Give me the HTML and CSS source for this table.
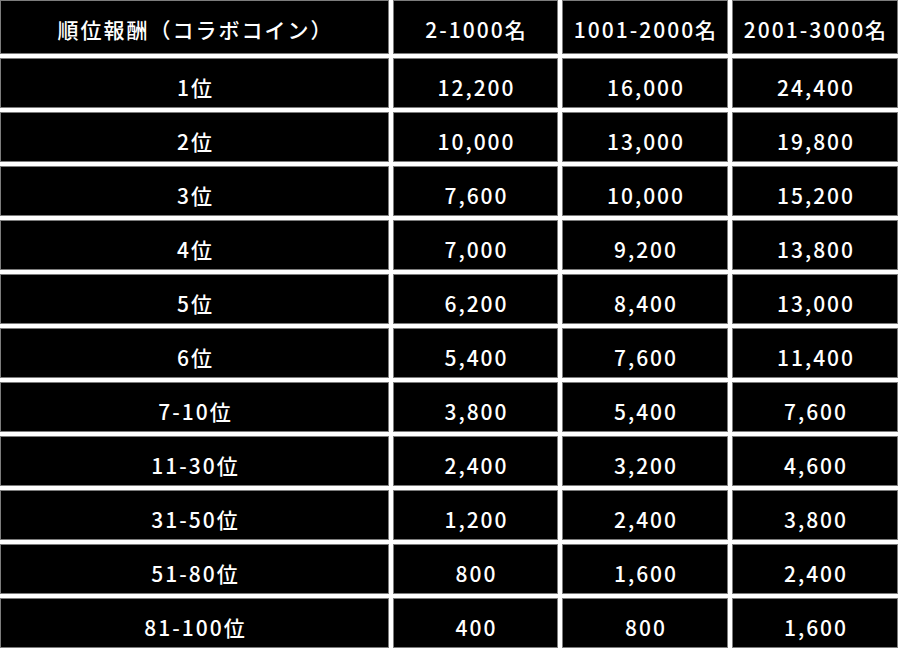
FILE: index.html
```html
<!DOCTYPE html>
<html lang="ja">
<head>
<meta charset="utf-8">
<title>順位報酬</title>
<link rel="stylesheet" href="styles.css">
</head>
<body>
<div class="table">
  <div class="cell head">順位報酬（コラボコイン）</div>
  <div class="cell head">2-1000名</div>
  <div class="cell head">1001-2000名</div>
  <div class="cell head">2001-3000名</div>

  <div class="cell">1位</div><div class="cell">12,200</div><div class="cell">16,000</div><div class="cell">24,400</div>
  <div class="cell">2位</div><div class="cell">10,000</div><div class="cell">13,000</div><div class="cell">19,800</div>
  <div class="cell">3位</div><div class="cell">7,600</div><div class="cell">10,000</div><div class="cell">15,200</div>
  <div class="cell">4位</div><div class="cell">7,000</div><div class="cell">9,200</div><div class="cell">13,800</div>
  <div class="cell">5位</div><div class="cell">6,200</div><div class="cell">8,400</div><div class="cell">13,000</div>
  <div class="cell">6位</div><div class="cell">5,400</div><div class="cell">7,600</div><div class="cell">11,400</div>
  <div class="cell">7-10位</div><div class="cell">3,800</div><div class="cell">5,400</div><div class="cell">7,600</div>
  <div class="cell">11-30位</div><div class="cell">2,400</div><div class="cell">3,200</div><div class="cell">4,600</div>
  <div class="cell">31-50位</div><div class="cell">1,200</div><div class="cell">2,400</div><div class="cell">3,800</div>
  <div class="cell">51-80位</div><div class="cell">800</div><div class="cell">1,600</div><div class="cell">2,400</div>
  <div class="cell">81-100位</div><div class="cell">400</div><div class="cell">800</div><div class="cell">1,600</div>
</div>
</body>
</html>
```
FILE: styles.css
```css
html, body {
  margin: 0;
  padding: 0;
  background: #ffffff;
}
body {
  font-family: "Noto Sans CJK JP", "Noto Sans", sans-serif;
}
.table {
  display: grid;
  grid-template-columns: 389px 165px 166px 166px;
  grid-template-rows: 54px;
  grid-auto-rows: 50px;
  gap: 4px;
  width: 898px;
}
.cell {
  box-sizing: border-box;
  background: #000000;
  border: 1px solid #7c7c7c;
  color: #ffffff;
  font-size: 21px;
  font-weight: 500;
  letter-spacing: 2px;
  display: flex;
  align-items: center;
  justify-content: center;
  padding-top: 7px;
  padding-left: 2px;
  white-space: nowrap;
}
.head {
  padding-top: 3px;
}
```
